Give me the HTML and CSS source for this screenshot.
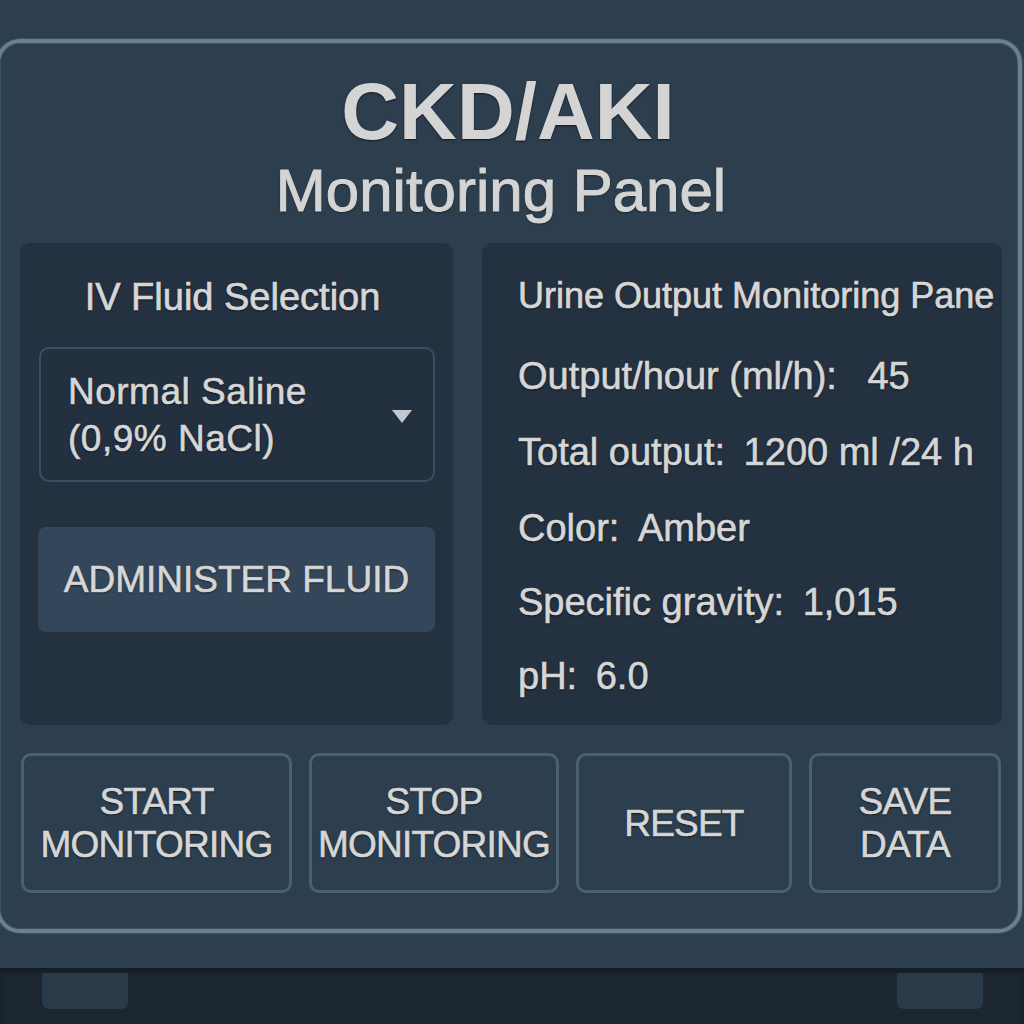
FILE: index.html
```html
<!DOCTYPE html>
<html lang="en">
<head>
<meta charset="utf-8">
<title>CKD/AKI Monitoring Panel</title>
<link rel="stylesheet" href="styles.css">
</head>
<body>
<div class="device">
  <div class="panel">
    <header class="head">
      <h1 class="title">CKD/AKI</h1>
      <h2 class="subtitle">Monitoring Panel</h2>
    </header>
    <div class="cards">
      <section class="card card-left">
        <h3 class="card-title center">IV Fluid Selection</h3>
        <div class="select">
          <div class="select-text">Normal Saline<br>(0,9% NaCl)</div>
          <span class="caret"></span>
        </div>
        <button class="admin">ADMINISTER FLUID</button>
      </section>
      <section class="card card-right">
        <h3 class="card-title nowrap">Urine Output Monitoring Pane</h3>
        <ul class="rows">
          <li><span class="k">Output/hour (ml/h):</span> <span class="v wide">45</span></li>
          <li><span class="k">Total output:</span> <span class="v">1200 ml /24 h</span></li>
          <li><span class="k">Color:</span> <span class="v">Amber</span></li>
          <li><span class="k">Specific gravity:</span> <span class="v">1,015</span></li>
          <li><span class="k">pH:</span> <span class="v">6.0</span></li>
        </ul>
      </section>
    </div>
    <div class="actions">
      <button class="act">START<br>MONITORING</button>
      <button class="act">STOP<br>MONITORING</button>
      <button class="act">RESET</button>
      <button class="act">SAVE<br>DATA</button>
    </div>
  </div>
</div>
<div class="base">
  <div class="foot"></div>
  <div class="foot"></div>
</div>
</body>
</html>
```
FILE: styles.css
```css
html, body {
  margin: 0;
  padding: 0;
}
body {
  width: 1024px;
  height: 1024px;
  overflow: hidden;
  background: #2d3e4e;
  font-family: "Liberation Sans", Arial, sans-serif;
  color: #d6d6d6;
}
.device {
  height: 968px;
  box-sizing: border-box;
  padding-top: 39px;
  overflow: hidden;
}
.panel {
  box-sizing: border-box;
  width: 1026px;
  height: 894px;
  margin-left: -4px;
  border: 4px solid #6a8090;
  border-radius: 24px;
  box-shadow: 0 0 0 1px #3c5060, inset 0 0 0 1px #3c5060;
  padding: 29px 16px 0 20px;
}
.head {
  text-shadow: 0 1px 2px rgba(0, 0, 0, 0.6);
}
.title {
  margin: 0;
  font-size: 80px;
  line-height: 80px;
  font-weight: bold;
  text-align: center;
  padding-right: 6px;
  color: #d4d4d4;
}
.subtitle {
  margin: 9px 0 0;
  font-size: 60px;
  line-height: 60px;
  font-weight: normal;
  -webkit-text-stroke: 1px #d4d4d4;
  text-align: center;
  padding-right: 20px;
  color: #d4d4d4;
}
.cards {
  display: grid;
  grid-template-columns: 433px 520px;
  column-gap: 29px;
  margin-top: 22px;
  height: 482px;
}
.card {
  background: #233140;
  border-radius: 10px;
  box-sizing: border-box;
  overflow: hidden;
  text-shadow: 0 1px 2px rgba(0, 0, 0, 0.6);
}
.card-left {
  padding-top: 32px;
}
.card-right {
  padding: 31px 0 0 36px;
}
.card-title {
  margin: 0;
  font-size: 36px;
  line-height: 44px;
  font-weight: normal;
  -webkit-text-stroke: 0.7px #d6d6d6;
}
.center {
  text-align: center;
  font-size: 38px;
  padding-right: 8px;
}
.nowrap {
  white-space: nowrap;
}
.select {
  box-sizing: border-box;
  margin: 28px 18px 0 19px;
  height: 135px;
  border: 2px solid #3b4f60;
  border-radius: 10px;
  background: #223040;
  display: flex;
  align-items: center;
  justify-content: space-between;
  padding: 0 21px 0 27px;
}
.select-text {
  font-size: 37px;
  line-height: 47px;
  letter-spacing: 0.5px;
  -webkit-text-stroke: 0.6px #d6d6d6;
}
.caret {
  width: 0;
  height: 0;
  border-left: 10px solid transparent;
  border-right: 10px solid transparent;
  border-top: 13px solid #c2c8ce;
  margin-top: 4px;
}
button {
  font-family: inherit;
  color: inherit;
  cursor: pointer;
}
.admin {
  display: block;
  box-sizing: border-box;
  margin: 45px 0 0 18px;
  width: 397px;
  height: 105px;
  background: #34475a;
  border: none;
  border-radius: 8px;
  font-size: 37px;
  color: #d6d6d6;
  text-shadow: 0 1px 2px rgba(0, 0, 0, 0.6);
  -webkit-text-stroke: 0.6px #d6d6d6;
}
.rows {
  list-style: none;
  margin: 21px 0 0;
  padding: 0;
}
.rows li {
  font-size: 38px;
  line-height: 74px;
  white-space: nowrap;
  -webkit-text-stroke: 0.6px #d6d6d6;
}
.rows li:nth-child(2) {
  line-height: 78px;
}
.v {
  margin-left: 8px;
}
.v.wide {
  margin-left: 20px;
}
.actions {
  display: grid;
  grid-template-columns: 271px 250px 216px 192px;
  column-gap: 17px;
  margin: 28px 0 0 1px;
  height: 140px;
}
.act {
  box-sizing: border-box;
  background: #2d3f4f;
  border: 3px solid #4b6071;
  border-radius: 10px;
  font-size: 37px;
  line-height: 43px;
  letter-spacing: -0.8px;
  color: #d6d6d6;
  -webkit-text-stroke: 0.6px #d6d6d6;
  text-shadow: 0 1px 2px rgba(0, 0, 0, 0.7);
  padding: 0;
}
.base {
  height: 56px;
  box-sizing: border-box;
  background: #1b2631;
  box-shadow: inset 0 4px 4px rgba(0, 0, 0, 0.25);
  display: flex;
  justify-content: space-between;
  padding: 5px 41px 0 42px;
}
.foot {
  width: 86px;
  height: 36px;
  background: #2a3a49;
  border-radius: 2px 2px 7px 7px;
}
```
